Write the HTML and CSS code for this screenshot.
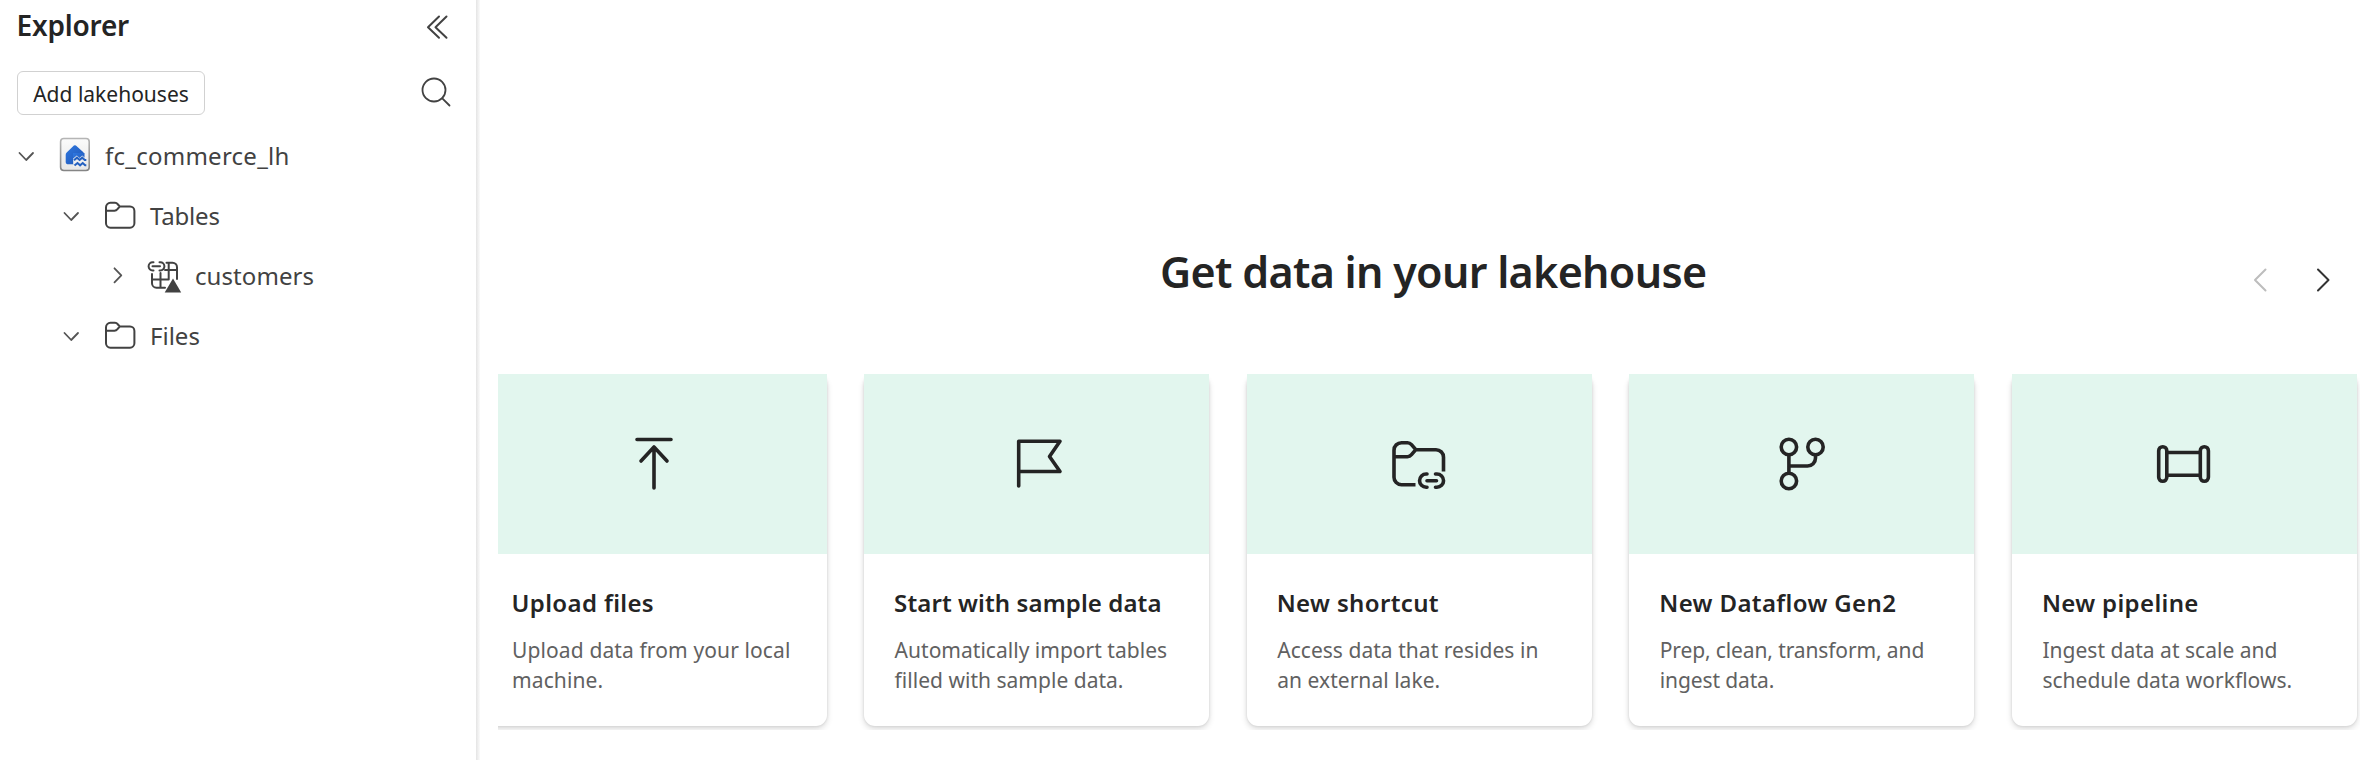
FILE: index.html
```
<!DOCTYPE html>
<html lang="en">
<head>
<meta charset="utf-8">
<title>Lakehouse</title>
<link rel="stylesheet" href="styles.css">
</head>
<body>
<div class="app">
  <aside class="explorer">
    <header class="explorer-head">
      <h2 class="explorer-title">Explorer</h2>
      <svg class="icon collapse" width="24" height="26" viewBox="0 0 24 26"><path d="M14 2.500 3 13.200 14 23.700M21.500 2.500 10.500 13.200 21.500 23.700"/></svg>
    </header>
    <div class="toolbar">
      <button class="add-button">Add lakehouses</button>
      <svg class="icon search" width="30" height="30" viewBox="0 0 30 30"><circle cx="13" cy="13" r="11.500"/><path d="M21.300 21.300 28.500 28.500"/></svg>
    </div>
    <ul class="tree">
      <li class="row">
        <svg class="icon chevron" width="20" height="20" viewBox="0 0 20 20"><path d="M3.500 8 10.200 15 17 8"/></svg>
        <svg class="item-icon" width="36" height="36" viewBox="0 0 36 36">
          <defs>
            <linearGradient id="tile" x1="0" y1="0" x2="0" y2="1"><stop offset="0" stop-color="#fbfbfb"/><stop offset="1" stop-color="#e6e6e6"/></linearGradient>
            <linearGradient id="tile-edge" x1="0" y1="0" x2="0" y2="1"><stop offset="0" stop-color="#b5b5b5"/><stop offset="1" stop-color="#858585"/></linearGradient>
            <linearGradient id="house" x1="0" y1="0" x2="1" y2="1"><stop offset="0" stop-color="#2f78e0"/><stop offset="1" stop-color="#1f55b5"/></linearGradient>
          </defs>
          <rect x="3.600" y="1.500" width="28.600" height="32" rx="3.200" fill="url(#tile)" stroke="url(#tile-edge)" stroke-width="1.600"/>
          <path d="M16.900 8.600q1-.7 2 0l7.200 6.300q1 1 1 2.200v.5H17.500l-1.500 5 1.500 4.700h-6q-2.800 0-2.800-2.400v-7.200q0-1.200 1-2.100z" fill="url(#house)"/>
          <path d="M16 16H27.500V28H16z" fill="url(#house)"/>
          <path d="M16.200 21.600l3.600-3 2.700 2.300 2.700-2.300 3 2.300V30H16.200z" fill="#efefef"/>
          <path d="M17 23.300l3-2.600 2.600 2.300 2.600-2.300 2.600 2.300h1.500M17.500 28.600l3-2.600 2.600 2.300 2.600-2.300 2.400 2.300h1.200" fill="none" stroke="#2460c0" stroke-width="2"/>
        </svg>
        <span class="label label-root">fc_commerce_lh</span>
      </li>
      <li class="row level-2">
        <svg class="icon chevron" width="20" height="20" viewBox="0 0 20 20"><path d="M3.500 8 10.200 15 17 8"/></svg>
        <svg class="icon folder" width="36" height="36" viewBox="0 0 36 36"><path d="M4 13V10.200a4.400 4.400 0 0 1 4.400-4.400H13c1.500 0 2 .5 3 1.700l1.700 2H28a4.400 4.400 0 0 1 4.400 4.400V26.300a4.400 4.400 0 0 1-4.400 4.400H8.400A4.400 4.400 0 0 1 4 26.300zM4 13.700H12.500c1.500 0 2-.3 3-1.500L17.700 9.500"/></svg>
        <span class="label label-tables">Tables</span>
      </li>
      <li class="row level-3">
        <svg class="icon chevron" width="20" height="20" viewBox="0 0 20 20"><path d="M7.500 3.300 14.300 10.300 7.500 17.300"/></svg>
        <svg class="icon folder" width="36" height="36" viewBox="0 0 36 36">
          <path d="M19.500 5.700H25.500a4.500 4.500 0 0 1 4.500 4.500V22M13.500 16V30.700M21.700 6V22.500H5M5 17V26.200A4.500 4.500 0 0 0 9.500 30.700H18M18 13H30"/>
          <path d="M6.500 5.200H5.700a4.100 4.100 0 0 0 0 8.200H6.500M12.500 5.200h.8a4.100 4.100 0 0 1 0 8.200h-.8M5.500 9.300H13"/>
          <path class="solid" d="M26 21.500 34.200 35.500H17.700z"/>
        </svg>
        <span class="label label-customers">customers</span>
      </li>
      <li class="row level-2">
        <svg class="icon chevron" width="20" height="20" viewBox="0 0 20 20"><path d="M3.500 8 10.200 15 17 8"/></svg>
        <svg class="icon folder" width="36" height="36" viewBox="0 0 36 36"><path d="M4 13V10.200a4.400 4.400 0 0 1 4.400-4.400H13c1.500 0 2 .5 3 1.700l1.700 2H28a4.400 4.400 0 0 1 4.400 4.400V26.300a4.400 4.400 0 0 1-4.400 4.400H8.400A4.400 4.400 0 0 1 4 26.300zM4 13.700H12.500c1.500 0 2-.3 3-1.500L17.700 9.500"/></svg>
        <span class="label">Files</span>
      </li>
    </ul>
  </aside>
  <main class="content">
    <header class="content-head">
      <h1 class="content-title">Get data in your lakehouse</h1>
      <nav class="pager">
        <svg class="icon prev" width="16" height="26" viewBox="0 0 16 26"><path d="M13.500 2.500 3 13 13.500 23.500"/></svg>
        <svg class="icon next" width="16" height="26" viewBox="0 0 16 26"><path d="M3 2.500 13.500 13 3 23.500"/></svg>
      </nav>
    </header>
    <section class="cards">
      <article class="card">
        <div class="card-art"><svg class="art" width="60" height="60" viewBox="-30 -30 60 60"><path d="M-17-24.500H17M0-16.500V24M-13-3 0-17 13-3"/></svg></div>
        <h3 class="card-title">Upload files</h3>
        <p class="card-text text-wide">Upload data from your local<br>machine.</p>
      </article>
      <article class="card">
        <div class="card-art"><svg class="art" width="60" height="60" viewBox="-30 -30 60 60"><path d="M-18.300 22V-22.700H23L12.500-7.500 23 7.500H-18.300"/></svg></div>
        <h3 class="card-title title-tight">Start with sample data</h3>
        <p class="card-text text-tight">Automatically import tables<br>filled with sample data.</p>
      </article>
      <article class="card">
        <div class="card-art"><svg class="art" width="60" height="60" viewBox="-30 -30 60 60"><path class="butt" d="M-3.500 20.700H-17.500A7.500 7.500 0 0 1-25 13.200V-13.800A7.500 7.500 0 0 1-17.500-21.300H-11.500C-9.500-21.300-8.700-20.700-7.500-19.300L-3.200-14.300H17A7.500 7.500 0 0 1 24.500-6.800V7.500M-25-7.300H-11.500C-9.500-7.300-8.700-7.900-7.500-9.300L-3.200-14.300"/><path d="M8 10H7.200A6.650 6.650 0 0 0 7.200 23.300H8M16.500 10H17.900A6.650 6.650 0 0 1 17.900 23.300H16.500M8 16.700H17.500"/></svg></div>
        <h3 class="card-title">New shortcut</h3>
        <p class="card-text">Access data that resides in<br>an external lake.</p>
      </article>
      <article class="card">
        <div class="card-art"><svg class="art" width="60" height="60" viewBox="-30 -30 60 60"><circle cx="-13.100" cy="-17" r="7.700"/><circle cx="13.500" cy="-17" r="7.700"/><circle cx="-13.100" cy="17" r="7.700"/><path d="M-13.100-9.300V9.300M-13.100 2H5.500A8 8 0 0 0 13.500-6V-9.300"/></svg></div>
        <h3 class="card-title">New Dataflow Gen2</h3>
        <p class="card-text text-narrow">Prep, clean, transform, and<br>ingest data.</p>
      </article>
      <article class="card">
        <div class="card-art"><svg class="art" width="60" height="60" viewBox="-30 -30 60 60"><rect x="-25.300" y="-17.300" width="8.100" height="34.600" rx="4"/><rect x="16.300" y="-17.300" width="8.100" height="34.600" rx="4"/><path d="M-17.200-11.500H16.300M-17.200 11.200H16.300"/></svg></div>
        <h3 class="card-title">New pipeline</h3>
        <p class="card-text text-tight">Ingest data at scale and<br>schedule data workflows.</p>
      </article>
    </section>
  </main>
</div>
</body>
</html>
```
FILE: styles.css
```
* { box-sizing: border-box; }

body {
  margin: 0;
  background: #fff;
  color: #242424;
  font-family: "Noto Sans", "Open Sans", sans-serif;
}

h1, h2, h3, p, ul { margin: 0; padding: 0; }

.app { display: flex; height: 760px; overflow: hidden; }

.icon {
  flex: none;
  fill: none;
  stroke: #424242;
  stroke-width: 1.800;
  stroke-linecap: round;
  stroke-linejoin: round;
}
.icon .solid { fill: #424242; stroke: none; }

/* Explorer pane */
.explorer {
  flex: none;
  width: 480px;
  padding-right: 4px;
  background: linear-gradient(90deg, #e4e4e4, #fbfbfb) right / 4px 100% no-repeat;
}
.explorer-head {
  display: flex;
  align-items: center;
  justify-content: space-between;
  height: 50px;
  padding: 0 27px 0 16.500px;
}
.explorer-title { font-size: 28px; font-weight: 600; line-height: 50px; letter-spacing: -.2px; }
.collapse { margin-top: 4px; stroke-width: 2; }
.toolbar {
  display: flex;
  align-items: flex-start;
  justify-content: space-between;
  height: 75px;
  padding: 21px 25px 0 17px;
}
.add-button {
  width: 188px;
  height: 44px;
  padding: 2px 0 0;
  border: 1px solid #d1d1d1;
  border-radius: 6px;
  background: #fff;
  color: #242424;
  font: 400 21px/38px "Noto Sans", "Open Sans", sans-serif;
}
.search { margin-top: 6px; }
.tree { list-style: none; }
.row { display: flex; align-items: center; height: 60px; padding-left: 16px; }
.level-2 { padding-left: 61px; }
.level-3 { padding-left: 107px; }
.chevron { margin-right: 21px; stroke: #555; }
.level-3 .chevron { margin-right: 20px; }
.label { margin: 1px 0 0 12px; color: #424242; font-size: 24px; line-height: 59px; }
.label-root { letter-spacing: .25px; }
.label-tables { letter-spacing: -.2px; }
.label-customers { letter-spacing: .07px; }
.folder { stroke-width: 2; }

/* Get data area */
.content { flex: 1; min-width: 0; padding: 236px 0 0 18px; }
.content-head {
  display: grid;
  grid-template-columns: 662px 1fr auto;
  align-items: center;
  height: 70px;
  padding-right: 29px;
}
.content-title {
  grid-column: 2;
  font-size: 43px;
  font-weight: 600;
  line-height: 71px;
  letter-spacing: -.7px;
  white-space: nowrap;
}
.pager { display: flex; gap: 47px; margin-top: 16px; }
.pager .icon { stroke-width: 2; }
.prev { stroke: #bdbdbd; }
.next { stroke: #333; }

.cards {
  display: flex;
  gap: 37.600px;
  height: 356px;
  margin-top: 68px;
  overflow: hidden;
}
.card {
  flex: none;
  width: 345px;
  height: 352px;
  border-radius: 11px;
  background: #fff;
  box-shadow: 0 0 3px rgba(0, 0, 0, .12), 0 3px 6px rgba(0, 0, 0, .14);
}
.card:first-child { margin-left: -16.500px; }
.card-art { display: grid; place-items: center; height: 180px; background: #e2f6ee; }
.art {
  fill: none;
  stroke: #242424;
  stroke-width: 3.600;
  stroke-linecap: round;
  stroke-linejoin: round;
}
.art .butt { stroke-linecap: butt; }
.card-title {
  padding: 33px 0 0 30px;
  font-size: 24px;
  font-weight: 600;
  line-height: 32px;
  letter-spacing: .36px;
  white-space: nowrap;
}
.title-tight { letter-spacing: .1px; }
.card-text {
  padding: 16px 0 0 30.500px;
  color: #616161;
  font-size: 21px;
  line-height: 30px;
  letter-spacing: .04px;
  white-space: nowrap;
}
.text-wide { letter-spacing: .12px; }
.text-tight { letter-spacing: .02px; }
.text-narrow { letter-spacing: -.12px; }
```
